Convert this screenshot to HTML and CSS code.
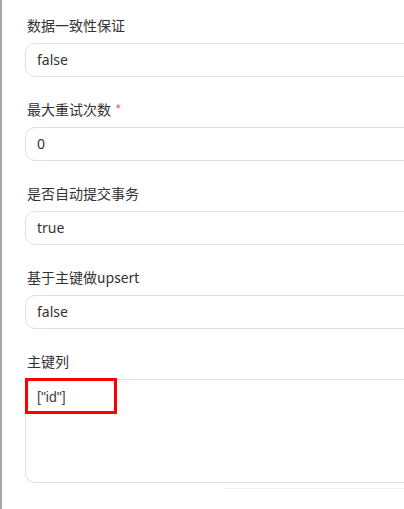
FILE: index.html
```html
<!DOCTYPE html>
<html lang="zh-CN">
<head>
<meta charset="utf-8">
<title>表单</title>
<link rel="stylesheet" href="styles.css">
</head>
<body>
<div class="panel">
  <div class="field">
    <div class="label">数据一致性保证</div>
    <div class="input">false</div>
  </div>
  <div class="field">
    <div class="label">最大重试次数<span class="req">*</span></div>
    <div class="input">0</div>
  </div>
  <div class="field">
    <div class="label">是否自动提交事务</div>
    <div class="input">true</div>
  </div>
  <div class="field">
    <div class="label">基于主键做upsert</div>
    <div class="input">false</div>
  </div>
  <div class="field field-area">
    <div class="label">主键列</div>
    <div class="area-wrap">
      <div class="textarea">["id"]</div>
      <div class="highlight"></div>
    </div>
    <div class="track"></div>
  </div>
  <div class="field">
    <div class="label">批量写入大小 batchSize</div>
    <div class="input">1000</div>
  </div>
</div>
</body>
</html>
```

FILE: styles.css
```css
html, body {
  margin: 0;
  padding: 0;
  background: #ffffff;
  overflow: hidden;
  height: 509px;
}

.panel {
  border-left: 2px solid #a6a6a6;
  padding: 15px 0 0 23px;
  min-height: 600px;
  display: flex;
  flex-direction: column;
  gap: 22px;
  font-family: "Noto Sans CJK SC", "Noto Sans", sans-serif;
  color: #333333;
}

.field {
  display: flex;
  flex-direction: column;
}

.label {
  font-size: 14px;
  line-height: 20px;
  height: 20px;
  padding-left: 2px;
  margin-bottom: 8px;
  color: #333333;
  white-space: nowrap;
}

.req {
  color: #f56c6c;
  margin-left: 4px;
}

.input {
  box-sizing: border-box;
  width: 430px;
  height: 34px;
  border: 1px solid #dcdfe6;
  border-radius: 10px;
  padding: 0 11px;
  font-family: "Noto Sans", "Noto Sans CJK SC", sans-serif;
  font-size: 14px;
  line-height: 32px;
  color: #333333;
}

.area-wrap {
  position: relative;
}

.textarea {
  box-sizing: border-box;
  width: 430px;
  height: 104px;
  border: 1px solid #dcdfe6;
  border-radius: 10px;
  padding: 7px 11px;
  font-family: "Liberation Sans", Arial, sans-serif;
  font-size: 14px;
  line-height: 20px;
  color: #444444;
}

.highlight {
  position: absolute;
  left: 0;
  top: -1px;
  width: 92px;
  height: 36px;
  box-sizing: border-box;
  border: 3px solid #ff0000;
}

.track {
  height: 1px;
  background: #f0f0f0;
  margin: 5px 0 -6px 199px;
}
```
